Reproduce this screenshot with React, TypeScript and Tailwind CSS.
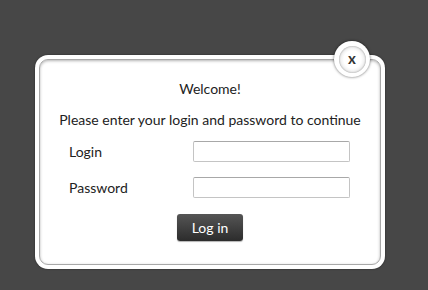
import React from "react";

function CloseButton() {
  return (
    <button
      type="button"
      className="absolute left-[299px] top-[-14px] flex h-[36px] w-[36px] items-center justify-center rounded-full bg-white shadow-[0_0_3px_rgba(0,0,0,0.6)]"
    >
      <span className="flex h-[27px] w-[27px] items-center justify-center rounded-full bg-[radial-gradient(circle,#ffffff_45%,#d2d2d2_100%)] shadow-[inset_0_0_2px_rgba(0,0,0,0.4)]">
        <span className="mt-[-2px] text-[15px] font-bold leading-none text-[#333]">x</span>
      </span>
    </button>
  );
}

function Field({ label, type }: { label: string; type: string }) {
  return (
    <div className="flex h-[21px] items-center">
      <label className="w-[153px] pl-[29px] text-[14px] text-[#222]">{label}</label>
      <input
        type={type}
        className="h-[21px] w-[157px] rounded-[2px] border border-[#c4c4c4] border-t-[#a8a8a8] bg-white outline-none"
      />
    </div>
  );
}

export default function App() {
  return (
    <div
      className="h-[290px] w-[428px] bg-[#474747] pl-[35px] pt-[55px]"
      style={{ fontFamily: "Lato, 'Liberation Sans', sans-serif" }}
    >
      <div className="relative h-[214px] w-[350px] rounded-[13px] bg-white p-[4px] shadow-[0_0_2px_rgba(0,0,0,0.5)]">
        <div className="flex h-full flex-col items-center rounded-[9px] border border-[#a8a8a8] bg-white shadow-[inset_0_1px_3px_rgba(0,0,0,0.3)]">
          <p className="mt-[20px] text-[14px] leading-[18px] text-[#222]">Welcome!</p>
          <p className="mt-[13px] text-[14px] leading-[18px] text-[#222]">
            Please enter your login and password to continue
          </p>
          <div className="mt-[12px] flex w-full flex-col gap-[15px]">
            <Field label="Login" type="text" />
            <Field label="Password" type="password" />
          </div>
          <button
            type="button"
            className="mt-[16px] h-[27px] w-[66px] rounded-[3px] bg-[linear-gradient(#555555,#2c2c2c)] text-[14px] text-white shadow-[0_1px_1px_rgba(0,0,0,0.3)]"
          >
            Log in
          </button>
        </div>
        <CloseButton />
      </div>
    </div>
  );
}
